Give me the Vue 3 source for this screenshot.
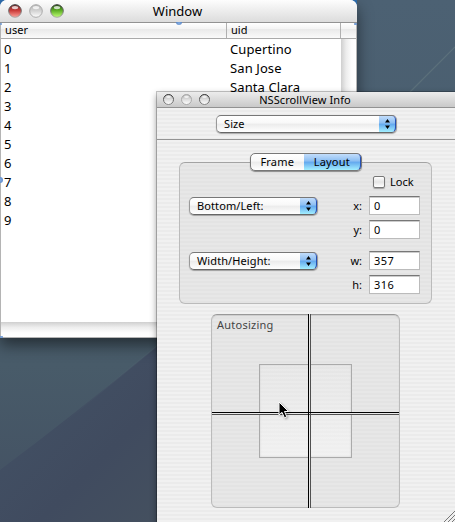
<script setup>
const cities = ['Cupertino', 'San Jose', 'Santa Clara']
const rows = Array.from({ length: 10 }, (_, i) => ({ user: String(i), uid: cities[i] || '' }))
const groups = [
  { label: 'Bottom/Left:', fields: [['x:', '0'], ['y:', '0']] },
  { label: 'Width/Height:', fields: [['w:', '357'], ['h:', '316']] }
]
</script>

<template>
  <div class="desktop">
    <svg class="wallpaper" width="455" height="522" viewBox="0 0 455 522">
      <defs>
        <linearGradient id="upper" x1="0" y1="0" x2="0" y2="1">
          <stop offset="0" stop-color="#4c6173" />
          <stop offset="0.7" stop-color="#485b69" />
          <stop offset="1" stop-color="#435062" />
        </linearGradient>
        <linearGradient id="lower" gradientUnits="userSpaceOnUse" x1="20" y1="400" x2="160" y2="540">
          <stop offset="0" stop-color="#425064" />
          <stop offset="0.5" stop-color="#404b5f" />
          <stop offset="1" stop-color="#45515f" />
        </linearGradient>
        <linearGradient id="ray" x1="0" y1="1" x2="1" y2="0">
          <stop offset="0" stop-color="#5b7078" stop-opacity="0" />
          <stop offset="0.6" stop-color="#5b7078" stop-opacity="0.7" />
          <stop offset="1" stop-color="#5f747d" stop-opacity="0.8" />
        </linearGradient>
      </defs>
      <rect width="455" height="522" fill="url(#upper)" />
      <path d="M0 470Q75 414 157 346V522H0Z" fill="url(#lower)" />
      <path d="M60 426L157 346M410 92L455 47" stroke="url(#ray)" fill="none" stroke-width="1.2" />
      <path d="M0 0H7L0 7ZM350 0H357V7Z" fill="#2f6fb1" />
    </svg>

    <section class="window">
      <header class="titlebar">
        <svg class="lights" width="58" height="18" viewBox="0 0 58 18">
          <defs>
            <linearGradient id="red" x1="0" y1="0" x2="0" y2="1"><stop offset="0" stop-color="#702c2c" /><stop offset=".45" stop-color="#c93a38" /><stop offset="1" stop-color="#ffa49c" /></linearGradient>
            <linearGradient id="clear" x1="0" y1="0" x2="0" y2="1"><stop offset="0" stop-color="#b4b4b4" /><stop offset=".5" stop-color="#d4d4d4" /><stop offset="1" stop-color="#fff" /></linearGradient>
            <linearGradient id="green" x1="0" y1="0" x2="0" y2="1"><stop offset="0" stop-color="#265510" /><stop offset=".45" stop-color="#5cae24" /><stop offset="1" stop-color="#c2ff78" /></linearGradient>
            <linearGradient id="rim" x1="0" y1="0" x2="0" y2="1"><stop offset="0" stop-color="#333" /><stop offset="1" stop-color="#aaa" /></linearGradient>
          </defs>
          <circle cx="8" cy="9" r="6.3" fill="url(#red)" stroke="url(#rim)" />
          <circle cx="29" cy="9" r="6.3" fill="url(#clear)" stroke="#aaa" />
          <circle cx="50" cy="9" r="6.3" fill="url(#green)" stroke="url(#rim)" />
          <g fill="#fff" opacity=".75"><ellipse cx="8" cy="5.6" rx="3.2" ry="1.6" /><ellipse cx="29" cy="5.6" rx="3.2" ry="1.6" /><ellipse cx="50" cy="5.6" rx="3.2" ry="1.6" /></g>
        </svg>
        <h1>Window</h1>
      </header>
      <div class="table">
        <div class="thead"><span class="c1">user</span><span class="c2">uid</span><span class="corner"></span></div>
        <div class="tbody">
          <div class="rows">
            <div v-for="r in rows" :key="r.user" class="row"><span>{{ r.user }}</span><span>{{ r.uid }}</span></div>
          </div>
          <div class="vtrack"></div>
        </div>
        <div class="htrack"></div>
      </div>
      <i class="knob k1"></i><i class="knob k2"></i><i class="knob k3"></i><i class="knob k4"></i><i class="knob k5"></i>
    </section>

    <section class="panel">
      <header class="ptitle">
        <svg class="plights" width="50" height="14" viewBox="0 0 50 14">
          <defs>
            <linearGradient id="pc" x1="0" y1="0" x2="0" y2="1"><stop offset="0" stop-color="#a4a4a4" /><stop offset=".45" stop-color="#dadada" /><stop offset="1" stop-color="#fff" /></linearGradient>
            <linearGradient id="prim" x1="0" y1="0" x2="0" y2="1"><stop offset="0" stop-color="#333" /><stop offset="1" stop-color="#888" /></linearGradient>
          </defs>
          <circle cx="7.5" cy="7.5" r="5" fill="url(#pc)" stroke="url(#prim)" />
          <circle cx="25.5" cy="7.5" r="5" fill="url(#pc)" stroke="#aaa" />
          <circle cx="43.5" cy="7.5" r="5" fill="url(#pc)" stroke="url(#prim)" />
          <g fill="#fff" opacity=".75"><ellipse cx="7.5" cy="4.7" rx="2.4" ry="1.2" /><ellipse cx="25.5" cy="4.7" rx="2.4" ry="1.2" /><ellipse cx="43.5" cy="4.7" rx="2.4" ry="1.2" /></g>
        </svg>
        <h2>NSScrollView Info</h2>
      </header>
      <div class="selector">
        <div class="popup"><span class="size">Size</span><b><svg width="18" height="16" viewBox="0 0 18 16"><path d="M6 6.5L8.5 3L11 6.5ZM6 9.5L8.5 13L11 9.5Z" /></svg></b></div>
      </div>
      <div class="group">
        <div class="tabs"><span>Frame</span><span class="on">Layout</span></div>
        <label class="lock"><i></i><span>Lock</span></label>
        <div v-for="g in groups" :key="g.label" class="pair">
          <div class="popup"><span>{{ g.label }}</span><b><svg width="18" height="16" viewBox="0 0 18 16"><path d="M6 6.5L8.5 3L11 6.5ZM6 9.5L8.5 13L11 9.5Z" /></svg></b></div>
          <div class="fields">
            <div v-for="f in g.fields" :key="f[0]" class="field"><span>{{ f[0] }}</span><div>{{ f[1] }}</div></div>
          </div>
        </div>
      </div>
      <div class="auto">
        <span>Autosizing</span>
        <div class="inner"></div>
        <svg class="cross" width="189" height="194" viewBox="0 0 189 194" shape-rendering="crispEdges">
          <path d="M98 0h1v194h-1zM1 99h187v1h-187z" fill="#e8e8e8" />
          <path d="M99 0h1v194h-1zM1 100h187v1h-187z" fill="#505050" />
          <path d="M97 0h1v194h-1zM1 98h187v1h-187z" fill="#000" />
        </svg>
        <svg class="cursor" width="14" height="20" viewBox="0 0 14 20">
          <path d="M1 1V14L4 11.3L6.4 16.8L8.8 15.8L6.5 10.5H10.6Z" fill="#000" stroke="#fff" stroke-width="1" />
        </svg>
      </div>
      <svg class="grip" width="12" height="12" viewBox="0 0 12 12"><path d="M1 12L12 1M5 12L12 5M9 12L12 9" stroke="#777" /></svg>
    </section>
  </div>
</template>

<style>
html, body { margin: 0; overflow: hidden; }
</style>

<style scoped>
* { box-sizing: border-box; }
.desktop { position: relative; width: 455px; height: 522px; overflow: hidden; color: #000; font: 11px/14px "Lucida Grande", "Noto Sans", sans-serif; white-space: nowrap; }
.wallpaper { display: block; }
.window { position: absolute; left: 0; top: 0; width: 357px; height: 338px; display: flex; flex-direction: column; background: #fff; border-radius: 7px 7px 0 0; box-shadow: 0 7px 15px rgba(0, 0, 0, .5); }
.titlebar { position: relative; height: 23px; border-bottom: 1px solid #929292; border-radius: 7px 7px 0 0; background: linear-gradient(#fdfdfd, #eee 45%, #dcdcdc); display: flex; justify-content: center; }
.lights { position: absolute; left: 7px; top: 2px; }
h1 { margin: 0; font-size: 13px; line-height: 22px; font-weight: 400; padding-right: 2px; }
.table { flex: 1; display: flex; flex-direction: column; border: solid #b4b4b4; border-width: 0 1px 1px; }
.thead { height: 16px; display: flex; border-bottom: 1px solid #aaa; background: linear-gradient(#fff, #f4f4f4 38%, #e9e9e9 40%, #fafafa); line-height: 14px; }
.c1 { width: 226px; padding-left: 4px; border-right: 1px solid #b0b0b0; letter-spacing: .1px; }
.c2 { width: 114px; padding-left: 4px; border-right: 1px solid #b0b0b0; }
.tbody { flex: 1; display: flex; }
.rows { flex: 1; padding-top: 1px; }
.row { height: 19px; display: grid; grid-template-columns: 226px 1fr; font-size: 13px; line-height: 19px; padding-left: 3px; letter-spacing: .1px; }
.vtrack { width: 15px; background: linear-gradient(90deg, #cfcfcf, #ededed 35%, #fcfcfc 70%, #fff); }
.htrack { height: 15px; background: linear-gradient(#cfcfcf, #ededed 35%, #fcfcfc 70%, #fff); }
.knob { position: absolute; width: 6px; height: 6px; border-radius: 3px; background: radial-gradient(circle, #85aee5, #5380bf); }
.k1 { left: -3px; top: 177px; }
.k2 { left: 176px; top: 22px; height: 3px; border-radius: 0 0 3px 3px; }
.k3 { left: 0; top: 23px; width: 2px; height: 2px; }
.k4 { left: 354px; top: 23px; width: 3px; height: 2px; }
.k5 { left: 0; top: 336px; width: 3px; height: 2px; }

.panel { position: absolute; left: 157px; top: 92px; width: 300px; height: 440px; background: repeating-linear-gradient(#f1f1f1 0 2px, #ebebeb 2px 4px); box-shadow: 0 0 0 1px rgba(0, 0, 0, .22), 0 3px 7px rgba(0, 0, 0, .45); }
.ptitle { height: 16px; position: relative; display: flex; justify-content: center; border-bottom: 1px solid #929292; background: linear-gradient(#ececec, #c9c9c9); }
.plights { position: absolute; left: 4px; top: 0; }
h2 { margin: 0; font-size: 11px; line-height: 16px; font-weight: 400; padding-right: 4px; letter-spacing: .08px; }
.selector { height: 32px; padding: 7px 0 0 59px; border-bottom: 1px solid #949494; }
.popup { width: 129px; height: 18px; display: flex; justify-content: space-between; border: 1px solid #777; border-color: #777 #999 #666; border-radius: 5px; background: linear-gradient(#fff, #f8f8f8 45%, #ebebeb 50%, #fff); box-shadow: 0 1px 1px rgba(0, 0, 0, .3); line-height: 15px; overflow: hidden; }
.popup span { padding-left: 7px; letter-spacing: .1px; }
.selector .popup { width: 181px; }
.popup b { width: 18px; height: 17px; margin: -1px -1px 0 0; border: solid #17228e; border-width: 1px 2px 0 0; border-right-color: #2550b5; border-radius: 0 5px 5px 0; background: linear-gradient(#c2ddfb, #8abdf2 45%, #62a7ee 50%, #a2efff); }
.popup svg { display: block; }
.group { position: relative; width: 253px; height: 142px; margin: 22px 0 0 22px; border: 1px solid #bbb; border-top-color: #a3a3a3; border-radius: 6px; background: repeating-linear-gradient(#e7e7e7 0 2px, #e3e3e3 2px 4px); }
.tabs { display: flex; width: 112px; height: 18px; margin: -10px 0 0 70px; border: 1px solid #777; border-radius: 5px; overflow: hidden; background: linear-gradient(#fff, #f8f8f8 45%, #ebebeb 50%, #fff); box-shadow: 0 1px 1px rgba(0, 0, 0, .4); line-height: 16px; }
.tabs span { width: 53px; text-align: center; letter-spacing: .2px; }
.tabs .on { width: 59px; margin: -1px -1px 0 0; border: solid #17228e; border-width: 1px 2px 0 0; border-right-color: #2550b5; border-radius: 0 5px 5px 0; background: linear-gradient(#c2ddfb, #8abdf2 45%, #62a7ee 50%, #a2efff); }
.lock { display: flex; gap: 5px; height: 14px; margin: 4px 0 7px 193px; }
.lock i { width: 12px; height: 12px; margin-top: 1px; border: 1px solid #777; border-radius: 2px; background: linear-gradient(#fff, #e4e4e4 50%, #fff); box-shadow: 0 1px 1px rgba(0, 0, 0, .3); }
.pair { display: flex; height: 55px; padding-left: 9px; }
.pair .popup { margin-top: 1px; }
.fields { width: 102px; display: flex; flex-direction: column; gap: 4px; }
.field { display: flex; justify-content: flex-end; gap: 7px; height: 20px; line-height: 20px; }
.field div { width: 51px; height: 19px; padding-left: 4px; line-height: 18px; letter-spacing: .5px; background: #fff; border: 1px solid #bbb; border-top-color: #777; box-shadow: inset 0 1px #ccc; }
.auto { position: relative; width: 189px; height: 194px; margin: 10px 0 0 54px; border: 1px solid #bbb; border-top: 1px solid #999; border-radius: 6px; background: repeating-linear-gradient(#e7e7e7 0 2px, #e3e3e3 2px 4px); color: #444; box-shadow: inset 0 1px 1px #ccc; }
.auto > span { display: block; padding: 3px 0 0 5px; letter-spacing: .25px; }
.inner { width: 93px; height: 94px; margin: 32px 0 0 47px; border: 1px solid #aaa; background: repeating-linear-gradient(rgba(255, 255, 255, .15) 0 2px, transparent 2px 4px), linear-gradient(#e5e5e5, #f0f0f0); box-shadow: inset 0 0 2px #ccc; }
.cross { position: absolute; left: -1px; top: -1px; }
.cursor { position: absolute; left: 66px; top: 86px; filter: drop-shadow(1px 1px 1px rgba(0, 0, 0, .35)); }
.grip { position: absolute; left: 286px; top: 418px; }
</style>
